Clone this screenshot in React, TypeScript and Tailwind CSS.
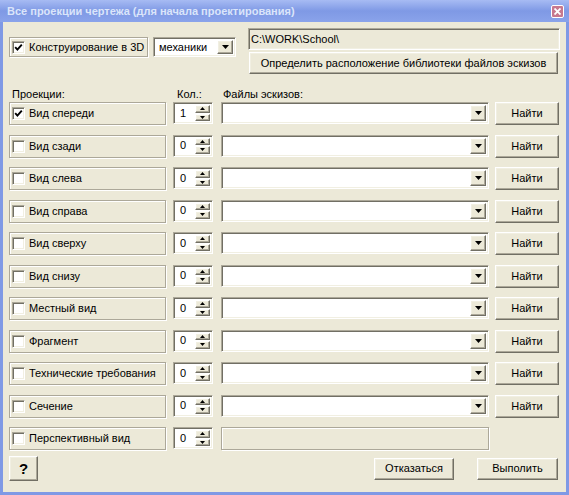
import React from "react";

const sunken =
  "border border-t-[#aca899] border-l-[#aca899] border-b-white border-r-white shadow-[inset_1px_1px_0_#716f64,inset_-1px_-1px_0_#f1efe2]";
const raised =
  "border border-t-white border-l-white border-b-[#716f64] border-r-[#716f64] shadow-[inset_-1px_-1px_0_#aca899,inset_1px_1px_0_#f1efe2] bg-[#ece9d8]";
const etched = "border border-[#aca899] shadow-[inset_1px_1px_0_white,1px_1px_0_white]";

type Row = { label: string; checked?: boolean; count: number; last?: boolean };

const rows: Row[] = [
  { label: "Вид спереди", checked: true, count: 1 },
  { label: "Вид сзади", count: 0 },
  { label: "Вид слева", count: 0 },
  { label: "Вид справа", count: 0 },
  { label: "Вид сверху", count: 0 },
  { label: "Вид снизу", count: 0 },
  { label: "Местный вид", count: 0 },
  { label: "Фрагмент", count: 0 },
  { label: "Технические требования", count: 0 },
  { label: "Сечение", count: 0 },
  { label: "Перспективный вид", count: 0, last: true },
];

function CheckBox({ checked }: { checked?: boolean }) {
  return (
    <span className={`flex h-[13px] w-[13px] shrink-0 items-center justify-center bg-white ${sunken}`}>
      {checked && (
        <svg width="9" height="9" viewBox="0 0 9 9">
          <path d="M1.2 4.2 L3.4 6.6 L7.8 1.6" fill="none" stroke="#000" strokeWidth="1.9" />
        </svg>
      )}
    </span>
  );
}

function DownArrow() {
  return (
    <svg width="7" height="4" viewBox="0 0 7 4">
      <path d="M0 0 H7 L3.5 4 Z" fill="#000" />
    </svg>
  );
}

function Combo({ width, text }: { width: string; text?: string }) {
  return (
    <div className={`flex h-full items-stretch bg-white p-[2px] ${sunken} ${width}`}>
      <span className="flex flex-1 items-center pl-[3px]">{text}</span>
      <span className={`flex w-[16px] items-center justify-center ${raised}`}>
        <DownArrow />
      </span>
    </div>
  );
}

function SpinBox({ value }: { value: number }) {
  return (
    <div className={`flex h-[22px] w-[40px] items-stretch bg-white p-[2px] ${sunken}`}>
      <span className="flex flex-1 items-center pl-[4px]">{value}</span>
      <div className="flex w-[15px] flex-col gap-[1px]">
        <span className={`flex flex-1 items-center justify-center ${raised}`}>
          <svg width="5" height="3" viewBox="0 0 5 3">
            <path d="M0 3 H5 L2.5 0 Z" fill="#000" />
          </svg>
        </span>
        <span className={`flex flex-1 items-center justify-center ${raised}`}>
          <svg width="5" height="3" viewBox="0 0 5 3">
            <path d="M0 0 H5 L2.5 3 Z" fill="#000" />
          </svg>
        </span>
      </div>
    </div>
  );
}

export default function App() {
  return (
    <div className="flex h-[495px] w-[569px] flex-col bg-[#7f99e5] font-['Liberation_Sans',Arial,sans-serif] text-[11px] leading-[13px] text-black">
      <div className="flex h-[22px] items-center justify-between bg-gradient-to-b from-[#a7bbf3] via-[#7f99e5] to-[#8aa3ea] pl-[7px] pr-[5px]">
        <span className="text-[11px] font-bold text-[#dbe5fa]">Все проекции чертежа (для начала проектирования)</span>
        <span className="flex h-[13px] w-[13px] items-center justify-center rounded-[2px] border border-white bg-[#c7788e]">
          <svg width="7" height="7" viewBox="0 0 7 7">
            <path d="M0.5 0.5 L6.5 6.5 M6.5 0.5 L0.5 6.5" stroke="#fff" strokeWidth="1.8" />
          </svg>
        </span>
      </div>

      <div className="mx-[3px] mb-[3px] flex flex-1 flex-col bg-[#ece9d8] px-[6px] pt-[6px]">
        <div className="flex">
          <div className="mt-[9px] flex h-[20px]">
            <div className={`flex w-[139px] items-center gap-[4px] pl-[2px] ${etched}`}>
              <CheckBox checked />
              <span>Конструирование в 3D</span>
            </div>
            <div className="ml-[5px] h-[20px]">
              <Combo width="w-[83px]" text="механики" />
            </div>
          </div>
          <div className="ml-[12px] flex w-[312px] flex-col gap-[2px]">
            <div className={`flex h-[22px] items-center pl-[2px] ${sunken}`}>C:\WORK\School\</div>
            <div className={`ml-[1px] flex h-[22px] w-[309px] items-center justify-center ${raised}`}>
              Определить расположение библиотеки файлов эскизов
            </div>
          </div>
        </div>

        <div className="mt-[14px] flex h-[13px]">
          <span className="ml-[3px] w-[165px]">Проекции:</span>
          <span className="w-[46px]">Кол.:</span>
          <span>Файлы эскизов:</span>
        </div>

        <div className="mt-[1px] grid grid-rows-[repeat(11,32.5px)]">
          {rows.map((row) => (
            <div key={row.label} className="flex items-start">
              <div className={`flex h-[23px] w-[157px] items-center gap-[4px] pl-[2px] ${etched}`}>
                <CheckBox checked={row.checked} />
                <span>{row.label}</span>
              </div>
              <div className="ml-[7px]">
                <SpinBox value={row.count} />
              </div>
              {row.last ? (
                <div className={`ml-[8px] h-[23px] w-[268px] ${etched}`} />
              ) : (
                <>
                  <div className="ml-[8px] h-[22px]">
                    <Combo width="w-[268px]" />
                  </div>
                  <div className={`ml-[6px] flex h-[23px] w-[64px] items-center justify-center ${raised}`}>Найти</div>
                </>
              )}
            </div>
          ))}
        </div>

        <div className="mt-[-4px] flex items-start">
          <div className={`flex h-[25px] w-[29px] items-center justify-center text-[15px] font-bold ${raised}`}>?</div>
          <div className={`ml-auto mt-[2px] flex h-[22px] w-[80px] items-center justify-center ${raised}`}>Отказаться</div>
          <div className={`ml-[23px] mr-[2px] mt-[2px] flex h-[22px] w-[81px] items-center justify-center ${raised}`}>Выполить</div>
        </div>
      </div>
    </div>
  );
}
